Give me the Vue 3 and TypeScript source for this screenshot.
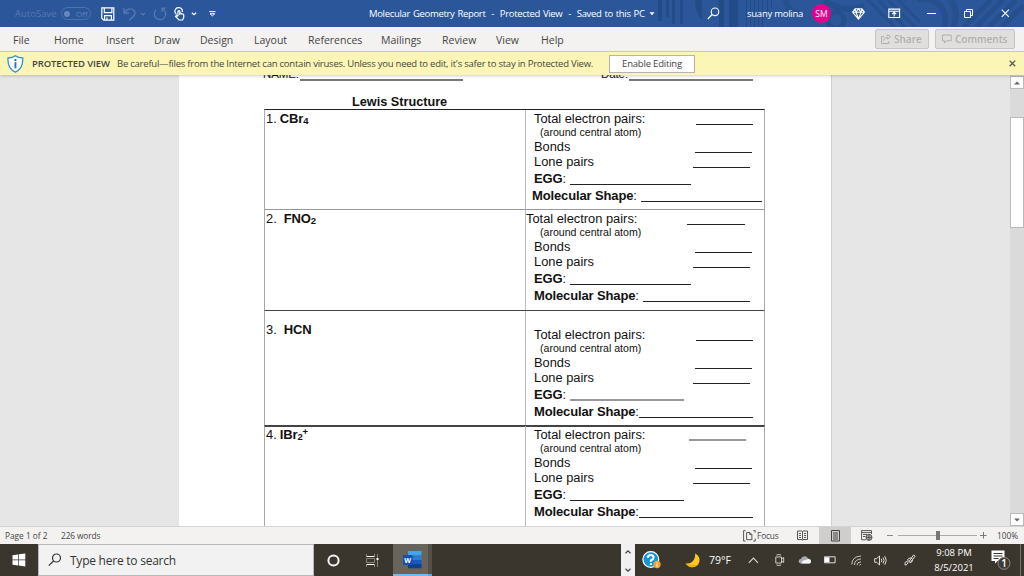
<script setup lang="ts">
interface Blank {
  x: number
  width: number
  soft?: boolean
}

interface Question {
  id: number
  name: string
  sub: string
  sup?: string
  indent: number
  variant: string
  // total, bonds, lone pairs, EGG, shape
  blanks: Blank[]
}

const tabs = ['File', 'Home', 'Insert', 'Draw', 'Design', 'Layout', 'References', 'Mailings', 'Review', 'View', 'Help']

const questions: Question[] = [
  {
    id: 1,
    name: 'CBr',
    sub: '4',
    indent: 3,
    variant: 'first',
    blanks: [
      { x: 170, width: 57 },
      { x: 169, width: 57 },
      { x: 167, width: 57 },
      { x: 44, width: 121 },
      { x: 115, width: 121 }
    ]
  },
  {
    id: 2,
    name: 'FNO',
    sub: '2',
    indent: 7,
    variant: 'second',
    blanks: [
      { x: 161, width: 58 },
      { x: 169, width: 57 },
      { x: 167, width: 57 },
      { x: 44, width: 121 },
      { x: 117, width: 107 }
    ]
  },
  {
    id: 3,
    name: 'HCN',
    sub: '',
    indent: 7,
    variant: 'third',
    blanks: [
      { x: 170, width: 57 },
      { x: 169, width: 57 },
      { x: 167, width: 57 },
      { x: 44, width: 114, soft: true },
      { x: 113, width: 114 }
    ]
  },
  {
    id: 4,
    name: 'IBr',
    sub: '2',
    sup: '+',
    indent: 3,
    variant: 'fourth',
    blanks: [
      { x: 163, width: 57, soft: true },
      { x: 169, width: 57 },
      { x: 167, width: 57 },
      { x: 44, width: 114 },
      { x: 113, width: 114 }
    ]
  }
]

const fields = [
  { key: 'total', label: 'Total electron pairs:', blank: 0 },
  { key: 'around', label: '(around central atom)', blank: -1 },
  { key: 'bonds', label: 'Bonds', blank: 1 },
  { key: 'lone', label: 'Lone pairs', blank: 2 },
  { key: 'egg', label: 'EGG', blank: 3, strong: true },
  { key: 'shape', label: 'Molecular Shape', blank: 4, strong: true }
]

const columns = (q: Question, index: number) => {
  const b = q.blanks[index]
  return b ? { gridTemplateColumns: `${b.x}px ${b.width}px` } : {}
}
</script>

<template>
  <div class="screen">
    <!-- Title bar -->
    <header class="titlebar">
      <svg class="pattern" width="380" height="27" viewBox="644 0 380 27">
        <g fill="#234b87">
          <path d="M658 0h4v21h-4zM666 0h3v17h-3zM672 0h3v24h-3zM680 0h3v24h-3zM695 0h7v20q-7-8-7-20zM719 0h5v27h-5zM729 0h9v27h-9zM746 0h1v27h-1zM750 0h1v27h-1zM754 0h1v27h-1zM758 0h1v27h-1zM762 0h1v27h-1zM767 0h1v17h-1zM771 0h1v8h-1z" />
        </g>
        <g fill="none" stroke="#264f8d">
          <circle cx="836" cy="20" r="8" stroke-width="5" />
          <path d="M786 0q2 14 14 13M824 0q18 14 40 6" stroke-width="6" />
          <path d="M868 0l27 27M878 0l27 27M888 0l27 27M898 0l22 22" stroke-width="3" />
          <path d="M903 0a29 27 0 0 1 50 27M917 0a21 21 0 0 1 27 27" stroke-width="6" />
          <path d="M964 27l27-27M976 27l27-27M989 27l27-27M1002 27l22-22" stroke-width="5" />
        </g>
      </svg>
      <span class="autosave">AutoSave</span>
      <span class="toggle"><i></i>Off</span>
      <svg width="14" height="14" viewBox="0 0 14 14" fill="none" stroke="#fff" stroke-width="1.2">
        <path d="M.8 .8h12v12.4h-10l-2-2zM3.3 1v4.6h7.6V1M3.6 13V8.7h6.8V13M6 10.5V13" />
      </svg>
      <svg width="14" height="14" viewBox="0 0 14 14" fill="none" stroke="#5579b3" stroke-width="1.3">
        <path d="M1 1v5h5M1.3 5.7C4 2 8 .5 11 3.5c3 3.5-1 6.500-4.700 9.700" />
      </svg>
      <svg width="6" height="4" viewBox="0 0 6 4" fill="none" stroke="#5579b3" stroke-width="1.2"><path d="M1 .8l2 2 2-2" /></svg>
      <svg width="14" height="14" viewBox="0 0 14 14" fill="none" stroke="#5579b3" stroke-width="1.3">
        <path d="M9 5V1.200h4M9.500 1.800A5.700 5.700 0 1 1 3 2.800" />
      </svg>
      <svg width="12" height="14" viewBox="0 0 12 14" fill="none" stroke="#fff" stroke-width="1.2">
        <path d="M2.500 7.300A3.700 3.700 0 1 1 8.300 5" />
        <path d="M4 9V4.400q1-1.500 1.800 0V8M5.800 6.500q1.800-.8 2 .6 1.800-.4 1.900 1v2.700L8.500 13H5L1.500 9.500 2.500 8.300 4 9.500" />
      </svg>
      <svg width="6" height="4" viewBox="0 0 6 4" fill="none" stroke="#fff" stroke-width="1.2"><path d="M.8 .8l2.200 2 2.200-2" /></svg>
      <svg width="7" height="6" viewBox="0 0 7 6" fill="none" stroke="#fff"><path d="M.3 .6h6.200M1 2.700l2.400 2.200 2.400-2.200z" /></svg>
      <span class="doc-title">Molecular Geometry Report &nbsp;- &nbsp;Protected View &nbsp;- &nbsp;Saved to this PC</span>
      <svg width="6" height="4" viewBox="0 0 6 4" fill="#fff"><path d="M.5 .3h5L3 3.300z" /></svg>
      <svg width="13" height="13" viewBox="0 0 13 13" fill="none" stroke="#fff" stroke-width="1.1">
        <circle cx="8" cy="4.800" r="3.800" /><path d="M5.200 7.500L.8 12" />
      </svg>
      <span class="user">suany molina</span>
      <span class="avatar">SM</span>
      <svg width="13" height="12" viewBox="0 0 13 12" fill="none" stroke="#fff" stroke-width="1.1">
        <path d="M3 .8h7l2.400 3.400L6.500 11.200.6 4.200zM.6 4.200h11.800M4 4.200l2.500 6.500L9 4.200 6.500 1 4 4.200 3 1M9 4.200L10 1" />
      </svg>
      <svg width="13" height="11" viewBox="0 0 13 11" fill="none" stroke="#fff" stroke-width="1.100">
        <path d="M.8 1.100h10.800v8.400H.8zM.8 3.200h10.800M6.200 8.500V4.500M4.200 6.200l2-1.900 2 1.900" />
      </svg>
      <svg width="9" height="3" viewBox="0 0 9 3"><path d="M0 1h9v1H0z" fill="#fff" /></svg>
      <svg width="10" height="10" viewBox="0 0 10 10" fill="none" stroke="#fff"><path d="M.5 2.500h6v6h-6zM2.500 2.500v-2h6v6h-2" /></svg>
      <svg width="9" height="9" viewBox="0 0 9 9" fill="none" stroke="#fff" stroke-width="1.100"><path d="M.7 .7l7.200 7.200M7.900 .7L.7 7.900" /></svg>
    </header>

    <!-- Ribbon tabs -->
    <nav class="ribbon">
      <div class="tabs">
        <span v-for="tab in tabs" :key="tab">{{ tab }}</span>
      </div>
      <button class="share">
        <svg width="10" height="10" viewBox="0 0 10 10" fill="none" stroke="#b1afad"><path d="M3 2.500H.6v7h7.200V7M2.500 6.500Q3 3.500 6.500 3.300V5.200L9.500 2.700 6.500.6v1.600" /></svg>
        Share
      </button>
      <button class="comments">
        <svg width="10" height="10" viewBox="0 0 10 10" fill="none" stroke="#b1afad"><path d="M.6 1h8.600v5.800H4.500L2.500 9V6.800H.6z" /></svg>
        Comments
      </button>
    </nav>

    <!-- Protected view bar -->
    <div class="protected">
      <svg width="17" height="18" viewBox="0 0 17 18">
        <path d="M8.300 .8Q11 3 15.700 3q.8 10.500-7.400 14.200Q.2 13.500 1 3 5.600 3 8.300 .8z" fill="#fff" stroke="#3490c6" stroke-width="1.300" />
        <path d="M7.500 4h1.900v2H7.500zM7.500 7.200h1.900v6H7.500z" fill="#1e74b8" />
      </svg>
      <b>PROTECTED VIEW</b>
      <span class="message">Be careful—files from the Internet can contain viruses. Unless you need to edit, it's safer to stay in Protected View.</span>
      <button>Enable Editing</button>
      <svg class="dismiss" width="7" height="7" viewBox="0 0 7 7" fill="none" stroke="#555" stroke-width="1.300"><path d="M.6 .6l5.600 5.600M6.200 .6L.6 6.200" /></svg>
    </div>

    <!-- Document -->
    <main class="workspace">
      <article class="page">
        <div class="student">
          <span>NAME:</span><i></i><span class="date">Date:</span><i></i>
        </div>
        <h1>Lewis Structure</h1>
        <section v-for="q in questions" :key="q.id" class="question" :class="q.variant">
          <div class="molecule">
            <span>{{ q.id }}.</span>
            <b :style="{ marginLeft: q.indent + 'px' }">{{ q.name }}<small>{{ q.sub }}</small><small v-if="q.sup" class="sup">{{ q.sup }}</small></b>
          </div>
          <div class="fields">
            <div v-for="f in fields" :key="f.key" class="field" :class="f.key" :style="columns(q, f.blank)">
              <span v-if="f.strong"><b>{{ f.label }}</b>:</span>
              <span v-else>{{ f.label }}</span>
              <i v-if="f.blank >= 0" :class="{ soft: q.blanks[f.blank].soft }"></i>
            </div>
          </div>
        </section>
      </article>
      <aside class="scrollbar">
        <div class="arrow"><svg width="6" height="4" viewBox="0 0 6 4"><path d="M0 3.500L3 .5l3 3z" fill="#666" /></svg></div>
        <div class="thumb"></div>
        <div class="arrow down"><svg width="6" height="4" viewBox="0 0 6 4"><path d="M0 .5l3 3 3-3z" fill="#666" /></svg></div>
      </aside>
    </main>

    <!-- Status bar -->
    <footer class="status">
      <span>Page 1 of 2</span>
      <span class="words">226 words</span>
      <svg width="13" height="12" viewBox="0 0 13 12" fill="none" stroke="#555">
        <path d="M2.500 .6H.6v10.500h1.900M10.300 .6h1.900v2M12.200 8.500v2.600h-1.900M3.600 2.500h3.300l2 2v5.200H3.600zM6.700 2.600v2h2" />
      </svg>
      <span class="focus">Focus</span>
      <svg width="11" height="11" viewBox="0 0 11 11" fill="none" stroke="#555"><path d="M.5 1h4.500l.5.500.5-.5h4.500v8.500H6l-.5.800-.5-.8H.5zM5.500 1.500v8M2 3.500h2M2 5.500h2M2 7.500h2M7 3.500h2M7 5.500h2M7 7.500h2" /></svg>
      <div class="print"><svg width="9" height="12" viewBox="0 0 9 12" fill="none" stroke="#444"><path d="M.5 .5h8v10.500h-8zM2 3h5M2 5h5M2 7h5M2 9h5" /></svg></div>
      <svg width="12" height="11" viewBox="0 0 12 11" fill="none" stroke="#555"><path d="M10.500 4V.6H.6v9.200H5M.6 2.600h9.900M2 4.500h4M2 6.500h2.500" /><circle cx="8" cy="7.400" r="3" fill="#aaa" /><path d="M5 7.400h6M8 4.400v6" /></svg>
      <svg width="6" height="3" viewBox="0 0 6 3"><path d="M0 1h6v1H0z" fill="#888" /></svg>
      <div class="slider"><i></i></div>
      <svg width="7" height="7" viewBox="0 0 7 7"><path d="M0 3h6.500v1H0zM3 0h1v6.500H3z" fill="#777" /></svg>
      <span class="zoom">100%</span>
    </footer>

    <!-- Windows taskbar -->
    <footer class="taskbar">
      <div class="start">
        <svg width="14" height="14" viewBox="0 0 14 14" fill="#fff"><path d="M.5 2.200L6 1.400v5.200H.5zM6.700 1.300L13.300.4v6.200H6.700zM.5 7.300H6v5.200l-5.500-.8zM6.700 7.300h6.600v6.200l-6.600-.9z" /></svg>
      </div>
      <div class="search">
        <svg width="14" height="14" viewBox="0 0 14 14" fill="none" stroke="#333" stroke-width="1.200"><circle cx="8.500" cy="5" r="4" /><path d="M5.500 8L.8 12.700" /></svg>
        <span>Type here to search</span>
      </div>
      <div class="cell"><svg width="13" height="13" viewBox="0 0 13 13" fill="none" stroke="#f5f5f5" stroke-width="2"><circle cx="6.500" cy="6.500" r="5.100" /></svg></div>
      <div class="cell"><svg width="13" height="13" viewBox="0 0 13 13" fill="none" stroke="#b9b6b0"><path d="M.5 2.500h8M.5 10.500h8" stroke="#fff" /><path d="M.5 0v2.500M8.500 0v2.500M.5 4.500v4h8v-4zM.5 10.500V13M8.500 10.500V13M11.500 0v13" stroke-opacity=".6" /><path d="M10.500 4h2v2h-2z" fill="#fff" stroke="none" /></svg></div>
      <div class="word">
        <svg width="19" height="19" viewBox="0 0 19 19">
          <path d="M5 1h13.500v4.500H5z" fill="#41a5ee" /><path d="M5 5.500h13.500V10H5z" fill="#2b7cd3" /><path d="M5 10h13.500v4H5z" fill="#185abd" /><path d="M5 14h13.500v4.300H5z" fill="#103f91" />
          <rect x="0" y="5" width="9.500" height="10" rx=".8" fill="#1650ae" />
          <text x="4.750" y="12.600" text-anchor="middle" class="letter">W</text>
        </svg>
      </div>
      <div class="spill"></div>
      <div class="stepper">
        <svg width="6" height="4" viewBox="0 0 6 4" fill="none" stroke="#444" stroke-width="1.200"><path d="M.5 3.300L3 .9l2.500 2.400" /></svg>
        <svg width="6" height="4" viewBox="0 0 6 4" fill="none" stroke="#444" stroke-width="1.200"><path d="M.5 .7L3 3.100 5.500 .7" /></svg>
      </div>
      <svg width="20" height="18" viewBox="0 0 20 18">
        <circle cx="8.800" cy="8.500" r="7.900" fill="#1495d4" stroke="#fff" stroke-width="1.200" />
        <path d="M5.800 6.800Q6 4 8.800 4q2.800 0 2.800 2.500 0 1.700-2.700 3v1.300M8.900 12.200v1.800" fill="none" stroke="#fff" stroke-width="2" />
        <circle cx="15" cy="13.500" r="3.700" fill="#f0a02c" /><path d="M14.500 11.200h1v1.200h-1zM14.500 13.200h1v2.600h-1z" fill="#fff" />
      </svg>
      <svg width="16" height="15" viewBox="0 0 16 15"><path d="M10 .6Q15.500 3.500 14.400 8.800 12.500 14 7.500 14.200 3 14.200 .7 10.200 5 11 7.800 8.200 10.800 5 10 .6z" fill="#fdcb20" /><path d="M.7 10.200Q3 14.200 7.500 14.200q4.500-.3 6.300-3.700-5.500 3.300-13.100-.3z" fill="#f8b010" /></svg>
      <span class="temp">79°F</span>
      <svg width="11" height="7" viewBox="0 0 11 7" fill="none" stroke="#d8d6d2" stroke-width="1.200"><path d="M.8 5.800L5.400 1.200 10 5.800" /></svg>
      <svg width="10" height="12" viewBox="0 0 10 12" fill="none" stroke="#d0cec9"><path d="M.8 3h5.700v6H.8zM6.500 5l2.200-1.500v5L6.500 7M1.500 1q2.500-.8 4.500 0M1.500 11q2.500.8 4.500 0" /></svg>
      <svg width="14" height="10" viewBox="0 0 14 10"><path d="M3 8.500Q.5 8.300.6 6 .8 4 3 3.800 4 1 6.800 1.200 9 1.300 10 3.500q3 .2 3 2.800-.2 2.200-2 2.200z" fill="#aaa" /><path d="M3.500 8.500Q4 5.500 6.500 5.300L10 4q3 .2 3 2.500t-2 2z" fill="#f4f4f4" /></svg>
      <svg width="12" height="8" viewBox="0 0 12 8"><path d="M.5 .8h10.600v6H.5z" fill="none" stroke="#ddd" /><path d="M1 1.300h4.500v5H1z" fill="#fff" /></svg>
      <svg width="11" height="11" viewBox="0 0 11 11" fill="none" stroke="#c9c6c0"><path d="M.8 9.500Q1 1.500 10 1M3.500 10Q3.500 4.300 10 4M6 10.200Q6 7 10 6.800M8.500 10.300L10 9.200" /></svg>
      <svg width="13" height="11" viewBox="0 0 13 11" fill="none" stroke="#ddd"><path d="M.7 3.600h2L5.500 1v9L2.700 7.300h-2zM7.300 3.800q1 1.700 0 3.400M9 2.500q2.200 3 0 6M10.800 1.200q3 4.300 0 8.600" /></svg>
      <svg width="12" height="12" viewBox="0 0 12 12" fill="none" stroke="#ddd"><path d="M5 7.500L9.500 1l1.700 1.200L6.200 8.500zM4.800 7.500Q2.500 6 4.500 4.500t4 .5M1 11q-.8-3.500 2-3.500 2 .7.300 2.500Q2 11.500 1 11zM6 8.500q2.500 0 2.500-2.500" /></svg>
      <div class="clock"><span>9:08 PM</span><span>8/5/2021</span></div>
      <svg width="20" height="20" viewBox="0 0 20 20">
        <path d="M.5 .5H13.500V11H6.500L4 13.500V11H.5z" fill="#fff" /><path d="M2.500 3.500h9M2.500 6h9M2.500 8.500h5" stroke="#3b362d" />
        <circle cx="13" cy="13.300" r="6" fill="#3d3b38" stroke="#8d8a85" />
        <text x="13" y="17" text-anchor="middle" class="count">1</text>
      </svg>
      <div class="peek"></div>
    </footer>
  </div>
</template>

<style>
body {
  margin: 0;
  overflow: hidden;
}
</style>

<style scoped>
.screen {
  width: 1024px;
  height: 576px;
  display: flex;
  flex-direction: column;
  font-family: "Open Sans", "Noto Sans", sans-serif;
  overflow: hidden;
  color: #444;
  white-space: nowrap;
}

.screen * {
  box-sizing: border-box;
}

svg {
  display: block;
}

i {
  font-style: normal;
}

button {
  font-family: inherit;
  padding: 0;
}

.titlebar {
  position: relative;
  height: 27px;
  flex: none;
  padding-left: 15px;
  display: grid;
  grid-template-columns: 46px 40px 22px 17px 13px 21px 17px 18px 160px 280px 58px 40px 65px 40px 36px 39px 37px 37px 20px;
  align-items: center;
  justify-items: start;
  background: #2b579a;
  color: #fff;
}

.titlebar > * {
  position: relative;
}

.titlebar > .pattern {
  position: absolute;
  top: 0;
  right: 0;
}

.autosave {
  font-size: 9.5px;
  color: #5478b2;
}

.toggle {
  width: 30px;
  height: 13px;
  border: 1px solid #4d73ad;
  border-radius: 7px;
  display: flex;
  align-items: center;
  gap: 6px;
  padding-left: 2px;
  font-size: 8px;
  color: #5e81b8;
}

.toggle i {
  width: 6px;
  height: 6px;
  border-radius: 50%;
  background: #6788bb;
}

.doc-title {
  font-size: 9.5px;
  letter-spacing: -0.32px;
  word-spacing: 0.75px;
}

.user {
  font-size: 9.5px;
  letter-spacing: -0.25px;
}

.avatar {
  width: 19px;
  height: 19px;
  border-radius: 50%;
  background: #e3008c;
  font-size: 8.5px;
  line-height: 19px;
  text-align: center;
}

.ribbon {
  height: 25px;
  flex: none;
  display: flex;
  align-items: flex-start;
  background: #f3f2f1;
  border-bottom: 1px solid #d0cecc;
}

.tabs {
  width: 875px;
  padding-left: 13px;
  display: grid;
  grid-template-columns: 41px 52px 48px 46px 54px 54px 73px 61px 54px 45px 40px;
  font-size: 10.5px;
  line-height: 27px;
}

.ribbon button {
  height: 20px;
  margin-top: 2px;
  display: flex;
  align-items: center;
  border: 1px solid #c8c6c4;
  border-radius: 2px;
  background: #e1dfdd;
  color: #b1afad;
  font-size: 10px;
  font-weight: 600;
}

.ribbon .share {
  width: 54px;
  gap: 3px;
  padding-left: 5px;
}

.ribbon .comments {
  width: 80px;
  gap: 3px;
  margin-left: 6px;
  padding-left: 6px;
}

.protected {
  position: relative;
  z-index: 1;
  height: 23px;
  flex: none;
  display: flex;
  align-items: center;
  padding: 0 8px 0 7px;
  background: #fcf6b6;
  box-shadow: 0 1px 3px rgba(0, 0, 0, 0.2);
  color: #444;
  font-size: 9.5px;
}

.protected b {
  width: 85px;
  margin-left: 8px;
  font-weight: 600;
  letter-spacing: -0.1px;
}

.message {
  width: 492px;
  letter-spacing: -0.23px;
}

.protected button {
  width: 86px;
  height: 18px;
  border: 1px solid #b5b3b0;
  background: #fff;
  color: #444;
  font-size: 9.5px;
  letter-spacing: -0.2px;
}

.dismiss {
  margin-left: auto;
}

.workspace {
  height: 451px;
  flex: none;
  display: flex;
  overflow: hidden;
  background: #e6e6e6;
}

.page {
  width: 653px;
  height: 451px;
  margin-left: 179px;
  padding-left: 85px;
  flex: none;
  overflow: hidden;
  background: #fff;
  border-right: 1px solid #cfcfcf;
  font-family: "Liberation Sans", Arial, sans-serif;
  font-size: 12.85px;
  line-height: 13px;
  color: #111;
}

.student {
  height: 13px;
  margin-top: -8px;
  display: grid;
  grid-template-columns: 36px 163px 166px 124px;
  font-size: 11.5px;
  line-height: 14px;
}

.student span {
  margin-left: -1px;
  letter-spacing: -0.1px;
}

.student .date {
  width: 28px;
  margin-left: 138px;
}

.student i {
  border-bottom: 2px solid #777;
}

h1 {
  margin: 16px 0 0 88px;
  height: 13px;
  font-size: 12.7px;
  line-height: 13px;
  color: #111;
}

.question {
  width: 501px;
  display: grid;
  grid-template-columns: 260px 239px;
  border: solid #aaa;
  border-width: 1px 1px 0 1px;
}

.question b {
  font-size: 13px;
  letter-spacing: -0.13px;
}

.first {
  height: 100px;
  border-top-color: #222;
}

.second {
  height: 101px;
  border-top-color: #999;
}

.third {
  height: 115px;
  border-top-color: #444;
}

.fourth {
  height: 101px;
  border-top: 2px solid #444;
}

.molecule {
  display: flex;
  padding: 2px 0 0 1px;
}

.third .molecule {
  padding-top: 12px;
}

.fourth .molecule {
  padding-top: 1px;
}

.molecule small {
  position: relative;
  top: 1px;
  font-size: 9.5px;
}

.molecule .sup {
  top: -4px;
}

.fields {
  border-left: 1px solid #bbb;
  min-width: 0;
}

.third .fields {
  padding-top: 15px;
}

.fourth .fields {
  margin-top: -1px;
}

.field {
  height: 15px;
  display: grid;
  align-items: end;
}

.field span {
  padding-left: 8px;
}

.second .total span {
  padding-left: 0;
}

.field i {
  border-bottom: 1px solid #222;
}

.field i.soft {
  border-bottom: 2px solid #999;
}

.around {
  height: 13px;
  font-size: 10.6px;
  line-height: 12px;
}

.around span {
  padding-left: 14px;
}

.egg,
.shape {
  height: 17px;
}

.first .shape span {
  padding-left: 6px;
}

.scrollbar {
  width: 14px;
  margin-left: auto;
  padding-top: 1px;
  display: flex;
  flex-direction: column;
  background: #dadada;
}

.arrow {
  height: 13px;
  flex: none;
  display: flex;
  align-items: center;
  justify-content: center;
  border: 1px solid #bababa;
  background: #fff;
}

.arrow.down {
  margin-top: auto;
}

.thumb {
  height: 111px;
  margin-top: 28px;
  border: 1px solid #bababa;
  background: #fff;
}

.status {
  height: 18px;
  flex: none;
  padding-left: 5px;
  display: grid;
  grid-template-columns: 56px 682px 14px 40px 22px 42px 26px 5px 88px 17px 27px;
  align-items: center;
  background: #f3f2f1;
  border-top: 1px solid #d5d3d1;
  font-size: 8.3px;
}

.focus {
  letter-spacing: -0.15px;
}

.words {
  letter-spacing: -0.1px;
}

.print {
  width: 32px;
  height: 17px;
  display: flex;
  align-items: center;
  justify-content: center;
  background: #d0cecc;
}

.slider {
  width: 79px;
  height: 9px;
  display: flex;
  justify-content: center;
  margin-left: 6px;
  background: linear-gradient(#aaa, #aaa) 0 4px / 100% 1px no-repeat;
}

.slider i {
  width: 4px;
  background: #777;
}

.taskbar {
  height: 32px;
  flex: none;
  display: grid;
  grid-template-columns: 38px 276px 38px 41px 35px 193px 21px 43px 24px 39px 27px 23px 26px 27px 23px 30px 30px 57px 29px 4px;
  align-items: center;
  background: #3b362d;
  color: #fff;
}

.start,
.cell {
  display: flex;
  align-items: center;
  justify-content: center;
}

.search {
  height: 32px;
  display: flex;
  align-items: center;
  gap: 8px;
  padding-left: 9px;
  border: 1px solid #b8b8b8;
  background: #f2f2f2;
  color: #333;
  font-size: 12px;
  letter-spacing: -0.24px;
}

.word {
  height: 32px;
  display: flex;
  align-items: center;
  justify-content: center;
  padding-left: 3px;
  background: #68645b;
  border-bottom: 2px solid #76b9ed;
}

.letter {
  font-size: 7px;
  font-weight: 700;
  fill: #fff;
}

.spill {
  width: 4px;
  height: 32px;
  background: #545047;
  border-bottom: 2px solid #6ba3cf;
}

.stepper {
  width: 14px;
  height: 32px;
  display: flex;
  flex-direction: column;
  align-items: center;
  justify-content: space-between;
  padding: 6px 0 4px;
  background: #f0f0f0;
}

.temp {
  font-size: 10.5px;
}

.clock {
  width: 40px;
  display: flex;
  flex-direction: column;
  align-items: center;
  font-size: 9.5px;
  line-height: 15px;
}

.count {
  font-size: 10px;
  font-weight: 600;
  fill: #fff;
}

.peek {
  height: 32px;
  border-left: 1px solid #77736b;
}
</style>
